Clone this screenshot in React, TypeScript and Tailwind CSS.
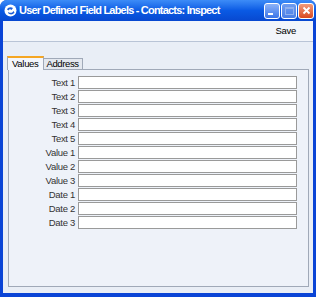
import React from "react";

const FIELDS = [
  "Text 1",
  "Text 2",
  "Text 3",
  "Text 4",
  "Text 5",
  "Value 1",
  "Value 2",
  "Value 3",
  "Date 1",
  "Date 2",
  "Date 3",
];

function AppIcon() {
  return (
    <svg width="13" height="13" viewBox="0 0 13 13">
      <circle cx="6.5" cy="6.5" r="6" fill="#ffffff" />
      <path d="M3 5.5 C4 3 7 2.5 9 4 L7.5 6 C6.5 5 5 5.2 4.5 6.5 Z" fill="#1f5fd8" />
      <path d="M4.5 8 C6 9.5 8.5 9 9.5 7 L10.5 8.5 C9 11 5.5 11 4 9 Z" fill="#1f5fd8" />
    </svg>
  );
}

function TitleButton({ kind }: { kind: "min" | "max" | "close" }) {
  const base =
    "w-[16px] h-[16px] rounded-[3px] border border-white flex items-center justify-center";
  if (kind === "close") {
    return (
      <div className={`${base} bg-gradient-to-b from-[#f09a7a] to-[#d9471a]`}>
        <svg width="9" height="9" viewBox="0 0 9 9">
          <path d="M1.5 1.5 L7.5 7.5 M7.5 1.5 L1.5 7.5" stroke="#fff" strokeWidth="1.8" />
        </svg>
      </div>
    );
  }
  if (kind === "min") {
    return (
      <div className={`${base} bg-gradient-to-b from-[#8cb2f7] to-[#3b74e8]`}>
        <div className="w-[5px] h-[2px] bg-white mt-[7px] -ml-[3px]" />
      </div>
    );
  }
  return (
    <div className={`${base} border-[#9dbaf3] bg-gradient-to-b from-[#6f9cf0] to-[#4a7fe6]`}>
      <div className="w-[9px] h-[8px] border border-[#8fb0ef] border-t-2" />
    </div>
  );
}

export default function App() {
  return (
    <div
      className="w-[316px] h-[297px] flex flex-col bg-[#0a44d6] rounded-t-[7px] overflow-hidden"
      style={{ fontFamily: '"Liberation Sans", Arial, sans-serif' }}
    >
      {/* Title bar */}
      <div className="h-[21px] shrink-0 flex items-center pl-[4px] pr-[2px] bg-gradient-to-b from-[#3d8cf7] via-[#0a5ae4] to-[#0848d0]">
        <AppIcon />
        <div className="ml-[2px] text-white font-bold text-[11px] tracking-[-0.8px] leading-none flex-1">
          User Defined Field Labels - Contacts: Inspect
        </div>
        <div className="flex gap-[1px]">
          <TitleButton kind="min" />
          <TitleButton kind="max" />
          <TitleButton kind="close" />
        </div>
      </div>

      {/* Client area */}
      <div className="flex-1 mx-[3px] mb-[4px] flex flex-col bg-[#e9eef6]">
        {/* Toolbar */}
        <div className="h-[21px] shrink-0 flex items-center justify-end pr-[17px] bg-[#f2f5fa] border-b border-[#b9c4d6]">
          <span className="text-[9.5px] tracking-[-0.3px] text-black">Save</span>
        </div>

        {/* Tabs */}
        <div className="flex-1 flex flex-col pl-[5px] pr-[4px] pt-[13px] pb-[6px]">
          <div className="flex items-end h-[14px] -ml-[1px]">
            <div className="h-[14px] px-[4px] bg-[#f4f6fb] border-x border-[#a0a9b8] border-t-2 border-t-[#f5a623] text-[9.5px] tracking-[-0.3px] leading-[12px] text-black -mb-[1px] relative z-10">
              Values
            </div>
            <div className="h-[11px] px-[3px] bg-[#e4e8ef] border-r border-t border-[#a0a9b8] text-[9.5px] tracking-[-0.4px] leading-[10px] text-black">
              Address
            </div>
          </div>
          <div className="flex-1 border border-[#a0a9b8] bg-[#eef2f9] pt-[6px]">
            <div className="flex flex-col gap-[1px]">
              {FIELDS.map((f) => (
                <div key={f} className="flex items-center h-[13px]">
                  <div className="w-[69px] text-right pr-[3px] text-[9.5px] tracking-[-0.3px] text-[#333] leading-none">
                    {f}
                  </div>
                  <div className="w-[219px] h-[13px] bg-white border border-[#9a9a9a]" />
                </div>
              ))}
            </div>
          </div>
        </div>
      </div>
    </div>
  );
}
